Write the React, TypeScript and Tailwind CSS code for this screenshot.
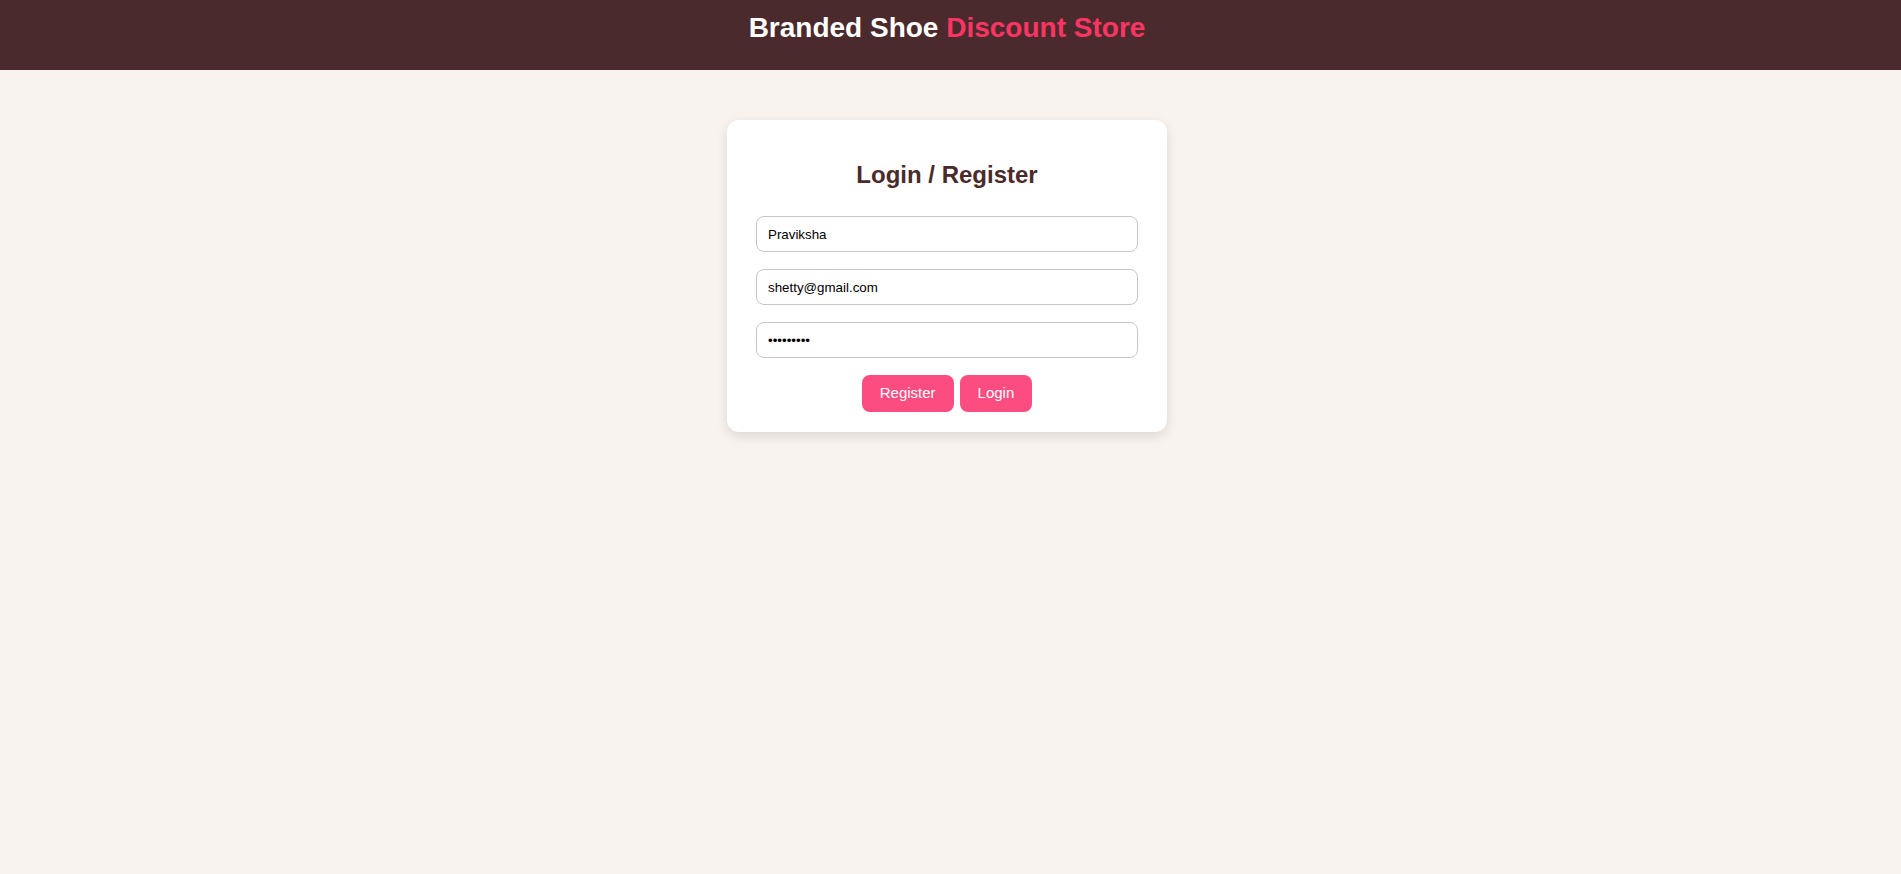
import { useState } from 'react'

export default function App() {
  const [name, setName] = useState('Praviksha')
  const [email, setEmail] = useState('shetty@gmail.com')
  const [password, setPassword] = useState('123456789')

  return (
    <div className="min-h-screen bg-[#f9f3f0] font-['Liberation_Sans',Arial,sans-serif]">
      {/* Header */}
      <header className="h-[70px] bg-[#4a2a2d] pt-[12px] pr-[7px] text-center">
        <h1 className="text-[28px] font-bold leading-[32px] text-white">
          Branded Shoe <span className="text-[#fe3563]">Discount Store</span>
        </h1>
      </header>

      {/* Auth card */}
      <main className="flex justify-center pt-[50px] pr-[7px]">
        <div className="w-[440px] rounded-[12px] bg-white px-[29px] pt-[41px] pb-[20px] shadow-[0_4px_12px_rgba(0,0,0,0.12)]">
          <h2 className="mb-[27px] text-center text-[24px] font-bold leading-[28px] text-[#4a2a2a]">
            Login / Register
          </h2>

          <div className="flex flex-col gap-[17px]">
            <input
              type="text"
              value={name}
              onChange={(e) => setName(e.target.value)}
              className="h-[36px] w-full rounded-[8px] border border-[#c6c6c6] px-[11px] text-[13.33px] text-black outline-none"
            />
            <input
              type="email"
              value={email}
              onChange={(e) => setEmail(e.target.value)}
              className="h-[36px] w-full rounded-[8px] border border-[#c6c6c6] px-[11px] text-[13.33px] text-black outline-none"
            />
            <input
              type="password"
              value={password}
              onChange={(e) => setPassword(e.target.value)}
              className="h-[36px] w-full rounded-[8px] border border-[#c6c6c6] px-[11px] text-[13.33px] text-black outline-none"
            />
          </div>

          <div className="mt-[17px] flex justify-center gap-[6px]">
            <button className="h-[37px] cursor-pointer rounded-[8px] bg-[#fd4c7f] px-[18px] text-[15px] text-white">
              Register
            </button>
            <button className="h-[37px] cursor-pointer rounded-[8px] bg-[#fd4c7f] px-[18px] text-[15px] text-white">
              Login
            </button>
          </div>
        </div>
      </main>
    </div>
  )
}
